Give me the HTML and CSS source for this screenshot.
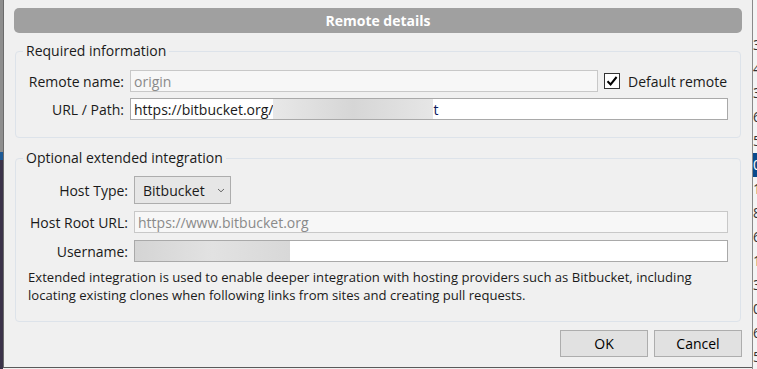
FILE: index.html
```html
<!DOCTYPE html>
<html>
<head>
<meta charset="utf-8">
<link rel="stylesheet" href="styles.css">
</head>
<body>
<div class="left-strip"></div>
<div class="dialog">
  <div class="titlebar">Remote details</div>

  <fieldset class="group group-req">
    <legend>Required information</legend>
    <div class="form form-req">
      <label class="lbl">Remote name:</label>
      <div class="row-inline">
        <div class="field field-disabled field-name">origin</div>
        <div class="check">
          <span class="box"><svg width="14" height="14" viewBox="0 0 14 14"><path d="M2.5 7.2 L5.6 10.4 L11.6 3" fill="none" stroke="#000" stroke-width="2"/></svg></span>
          <span class="check-text">Default remote</span>
        </div>
      </div>
      <label class="lbl">URL / Path:</label>
      <div class="field field-url"><span>https://bitbucket.org/</span><span class="redact redact-url"></span><span class="tail">t</span></div>
    </div>
  </fieldset>

  <fieldset class="group group-opt">
    <legend>Optional extended integration</legend>
    <div class="form form-opt">
      <label class="lbl">Host Type:</label>
      <div><div class="select">Bitbucket<svg class="chev" width="8" height="5" viewBox="0 0 8 5"><path d="M1 1 L4 3.8 L7 1" fill="none" stroke="#666" stroke-width="1"/></svg></div></div>
      <label class="lbl">Host Root URL:</label>
      <div class="field field-disabled">https://www.bitbucket.org</div>
      <label class="lbl">Username:</label>
      <div class="field field-user"><span class="redact redact-user"></span></div>
    </div>
    <p class="desc">Extended integration is used to enable deeper integration with hosting providers such as Bitbucket, including locating existing clones when following links from sites and creating pull requests.</p>
  </fieldset>

  <div class="buttons">
    <button class="btn">OK</button>
    <button class="btn">Cancel</button>
  </div>
</div>
<div class="right-strip">
  <div class="digits">
    <div>3</div><div>4</div><div>3</div><div>6</div><div>5</div><div class="hl">0</div><div>1</div><div>8</div><div>6</div><div>1</div><div>3</div><div>0</div><div>6</div><div>5</div>
  </div>
</div>
</body>
</html>
```

FILE: styles.css
```css
html, body {
  margin: 0;
  padding: 0;
}
body {
  width: 757px;
  height: 369px;
  overflow: hidden;
  display: flex;
  font-family: "Open Sans", "Noto Sans", sans-serif;
  font-size: 13.5px;
  color: #1a1a1a;
  background: #f0f0f0;
}
.left-strip {
  width: 3px;
  flex: none;
  background: linear-gradient(180deg, #8e8e8e 0, #8e8e8e 152px, #1e5a96 152px, #1e5a96 160px, #3b3349 160px, #3b3349 100%);
}
.dialog {
  flex: none;
  width: 749px;
  height: 368px;
  box-sizing: border-box;
  border-left: 1px solid #6b6b6b;
  border-bottom: 1px solid #5a5a5a;
  padding: 8px 10px 0 10px;
  background: #f0f0f0;
  display: flex;
  flex-direction: column;
}
.titlebar {
  height: 25px;
  border-radius: 5px;
  background: #a0a0a0;
  color: #fff;
  font-weight: 700;
  font-size: 14px;
  display: flex;
  align-items: center;
  justify-content: center;
}
.group {
  margin: 8px 1px 0 1px;
  border: 1px solid #dde3ea;
  border-radius: 4px;
  padding: 9px 12px 17px 0;
  min-width: 0;
}
.group-opt {
  margin-top: 10px;
  padding-top: 8px;
}
.group legend {
  margin-left: 7px;
  padding: 0 3px;
  line-height: 20px;
  font-size: 14px;
}
.form {
  display: grid;
  column-gap: 6px;
  row-gap: 6px;
  align-items: center;
}
.form-req {
  grid-template-columns: 108px 1fr;
}
.form-opt {
  grid-template-columns: 112px 1fr;
  row-gap: 7px;
}
.lbl {
  text-align: right;
  font-size: 14px;
  white-space: nowrap;
}
.row-inline {
  display: flex;
  align-items: center;
}
.field {
  box-sizing: border-box;
  height: 22px;
  border: 1px solid #a9a9a9;
  background: #fff;
  padding: 0 3px;
  display: flex;
  align-items: center;
  font-size: 14px;
  white-space: nowrap;
  overflow: hidden;
}
.field-disabled {
  background: #f7f7f7;
  border-color: #c8c8c8;
  color: #8a8a8a;
}
.field-name {
  width: 468px;
  flex: none;
}
.check {
  display: flex;
  align-items: center;
  margin-left: 6px;
}
.box {
  box-sizing: border-box;
  width: 16px;
  height: 16px;
  border: 1px solid #333;
  background: #fff;
  display: flex;
  align-items: center;
  justify-content: center;
}
.check-text {
  margin-left: 8px;
  font-size: 14px;
}
.redact {
  display: inline-block;
  background: linear-gradient(90deg, #e8e8e8, #d6d6d6 50%, #e6e6e6);
}
.redact-url {
  width: 160px;
  height: 20px;
}
.tail {
  color: #0a1a5a;
}
.field-user {
  padding: 0;
}
.redact-user {
  width: 156px;
  height: 22px;
  margin-left: -1px;
  background: linear-gradient(90deg, #d4d4d4, #e2e2e2 50%, #d8d8d8);
}
.select {
  box-sizing: border-box;
  width: 97px;
  height: 28px;
  border: 1px solid #adadad;
  background: #e6e6e6;
  display: flex;
  align-items: center;
  padding-left: 8px;
  font-size: 14px;
}
.chev {
  margin-left: 12px;
}
.desc {
  margin: 6px 0 0 12px;
  font-size: 13.1px;
  line-height: 18px;
}
.buttons {
  display: flex;
  justify-content: flex-end;
  gap: 6px;
  margin-top: 8px;
}
.btn {
  width: 88px;
  height: 27px;
  border: 1px solid #adadad;
  background: #e1e1e1;
  font-family: inherit;
  font-size: 14px;
  color: #000;
  padding: 0;
}
.right-strip {
  flex: none;
  width: 4px;
  border-left: 1px solid #8a8a8a;
  background: #f4f4f4;
  overflow: hidden;
}
.digits {
  margin-top: 33px;
  font-size: 14px;
  line-height: 24px;
  color: #333;
}
.digits .hl {
  background: #0a4a8c;
  color: #fff;
}
```
